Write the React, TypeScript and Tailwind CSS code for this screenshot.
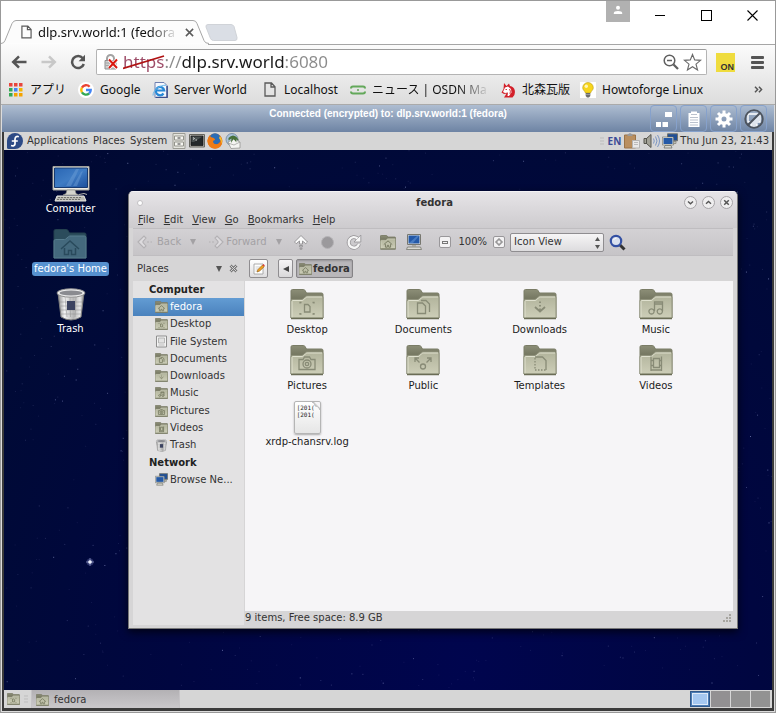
import React from "react";

type Emblem = "home" | "desktop" | "documents" | "downloads" | "music" | "pictures" | "public" | "templates" | "videos";

function EmblemShape({ kind }: { kind: Emblem }) {
  switch (kind) {
    case "home":
      return <path d="M8 20l9-8 9 8M11.500 19v6.500h4v-4h3v4h4V19" />;
    case "desktop":
      return <path d="M14.500 15.500h3.500l2 2V23h-5.500zM10 14.500v-1h1.500M24 14.500v-1h-1.500M10 24v1h1.500M24 24v1h-1.500" />;
    case "documents":
      return <path d="M11.500 14h5l3 3v7.500h-8zM15 11.500h5l3.500 3.500v8" />;
    case "downloads":
      return (
        <>
          <path d="M12 18l5 4.500 5-4.500" strokeWidth="1.800" />
          <path d="M17 12.500v1.500M17 16v1.500M17 19.500v2" strokeWidth="1.800" />
        </>
      );
    case "music":
      return <path d="M15.500 22v-9h8v9M15.500 15h8M12.500 19.800a2.600 2.600 0 1 0 .01 0M20.800 19.800a2.600 2.600 0 1 0 .01 0" />;
    case "pictures":
      return (
        <>
          <path d="M9 14.500h4l1.500-2.500h5l1.500 2.500h4v10H9z" />
          <circle cx="17" cy="19" r="4" />
          <circle cx="17" cy="19" r="1.700" />
        </>
      );
    case "public":
      return (
        <>
          <circle cx="17" cy="21.500" r="2.500" />
          <path d="M13.500 17.500l-4-4M9 17v-4h4M20.500 17.500l4-4M21 13h4v4" />
        </>
      );
    case "templates":
      return (
        <>
          <path d="M12 12h7.500l3.500 3.500V25" />
          <path d="M12 13v12h11" strokeDasharray="1.500 1.500" />
        </>
      );
    case "videos":
      return <path d="M12 11.500V26M22.500 11.500V26M14.500 13.500h6v9h-6zM12 15.500h2M12 20.500h2M20.500 15.500h2M20.500 20.500h2M12 25h10.500" />;
  }
}

function Folder({ kind, className, small = false }: { kind: Emblem; className: string; small?: boolean }) {
  return (
    <svg viewBox="0 0 34 31" className={className} aria-hidden="true">
      <defs>
        <linearGradient id="folderFront" x1="0" y1="0" x2="0" y2="1">
          <stop offset="0" stopColor="#b1b39b" />
          <stop offset="1" stopColor="#cdceb8" />
        </linearGradient>
        <linearGradient id="folderBack" x1="0" y1="0" x2="0" y2="1">
          <stop offset="0" stopColor="#8c8e77" />
          <stop offset=".3" stopColor="#777963" />
        </linearGradient>
      </defs>
      <path d="M1 29V2q0-1.500 1.500-1.500h11q1 0 1.500 1l1.500 2.500h15q1.500 0 1.500 1.500V29z" fill="url(#folderBack)" stroke="#7a7c66" strokeWidth={small ? 2 : 1} />
      <path d="M1 29V12q0-1.500 1.500-1.500h9q1 0 1.500-.7L15.500 7.700q.7-.7 1.500-.7h14.500Q33 7 33 8.500V29z" fill="url(#folderFront)" stroke="#90927c" strokeWidth={small ? 2 : 1} />
      <path d="M2 28.500V12.500q0-1 1-1h9q1 0 1.700-.8l2-2q.7-.7 1.500-.7H32" fill="none" stroke="#dfe0ce" strokeWidth="1" />
      <path d="M1 29.500h32" stroke="#6a6c55" strokeWidth="1.500" />
      <g fill="none" stroke={small ? "#74775f" : "#888b76"} strokeWidth={small ? 2 : 1.3}>
        <EmblemShape kind={kind} />
      </g>
    </svg>
  );
}

function Monitor({ className }: { className: string }) {
  return (
    <svg viewBox="0 0 38 36" className={className} aria-hidden="true">
      <defs>
        <linearGradient id="screenBlue" x1="0" y1="0" x2="1" y2="1">
          <stop offset="0" stopColor="#2a66b4" />
          <stop offset=".5" stopColor="#3f7cc4" />
          <stop offset="1" stopColor="#1c4f9c" />
        </linearGradient>
      </defs>
      <path d="M1 .5h36v23.500H1z" fill="#eceae4" stroke="#a3a39b" />
      <path d="M2.500 2h33v19.500h-33z" fill="url(#screenBlue)" stroke="#173a70" />
      <path d="M14 20L24 3h3L19 20zM21 20L29 6l2-1-6 15z" fill="#6fa0d8" opacity=".45" />
      <path d="M15 24h8l1 3.500 3 1.500H11l3-1.500z" fill="#d4d4ce" stroke="#8b8b84" strokeWidth=".6" />
      <path d="M27 28.500q6-2 8 0" stroke="#b5b5b0" fill="none" />
      <path d="M5 30h27l2 5H3z" fill="#b9b9b3" stroke="#e8e8e2" />
      <path d="M6 31.500h24M5 33.500h24" stroke="#74746f" strokeDasharray="2 1" />
    </svg>
  );
}

function SmallMonitor({ className }: { className: string }) {
  return (
    <svg viewBox="0 0 16 16" className={className} aria-hidden="true">
      <path d="M1.500.5h13v10h-13z" fill="#e6e6df" stroke="#77776f" />
      <path d="M2.500 1.500h11v8h-11z" fill="#2459a8" />
      <path d="M3 9L11 2h2L7 9z" fill="#5f93d3" opacity=".6" />
      <path d="M6 11h4v1.500H6z" fill="#a9a9a2" />
      <path d="M1.500 13h13l1 2.500H.5z" fill="#d9d9d2" stroke="#77776f" strokeWidth=".8" />
    </svg>
  );
}

function TrashCan({ className }: { className: string }) {
  return (
    <svg viewBox="0 0 30 33" className={className} aria-hidden="true">
      <defs>
        <linearGradient id="steel" x1="0" y1="0" x2="1" y2="0">
          <stop offset="0" stopColor="#8c8c8c" />
          <stop offset=".25" stopColor="#f2f2f2" />
          <stop offset=".6" stopColor="#b5b5b5" />
          <stop offset=".85" stopColor="#e8e8e8" />
          <stop offset="1" stopColor="#858585" />
        </linearGradient>
      </defs>
      <path d="M2 5l3 24q10 6 20 0l3-24z" fill="url(#steel)" stroke="#7c7c7c" />
      <path d="M4 14h22M4.500 18h21M5 22h20M5 26h20M9 9l2 20M14 9l.5 20M20 9l-1 20" stroke="#8b8b8b" strokeWidth=".7" opacity=".7" />
      <path d="M11 13h8v9h-8z" fill="#3c4360" />
      <ellipse cx="15" cy="5" rx="14" ry="4.200" fill="#ececec" stroke="#909090" />
      <ellipse cx="15" cy="5" rx="11.500" ry="2.600" fill="#8a8b90" />
    </svg>
  );
}

function Network({ className }: { className: string }) {
  return (
    <svg viewBox="0 0 16 16" className={className} aria-hidden="true">
      <path d="M5.500.8h10v7h-10z" fill="#1f4f97" stroke="#74746b" />
      <path d="M10 8.500h4v2h-4z" fill="#c5c5bb" stroke="#74746b" strokeWidth=".6" />
      <path d="M1 4.500h10v7H1z" fill="#2459a6" stroke="#e5e5dc" />
      <path d="M.4 4h11.200v8H.4z" fill="none" stroke="#66665d" strokeWidth=".6" />
      <path d="M3 12.500h6l1 2.500H2z" fill="#d8d8cf" stroke="#66665d" strokeWidth=".7" />
    </svg>
  );
}

function PageIcon({ className }: { className: string }) {
  return (
    <svg viewBox="0 0 12 15" className={className} aria-hidden="true" fill="none" stroke="#5a5a5a" strokeWidth="1.300">
      <path d="M1 1h6.500L11 4.700V14H1zM7 1v4h4" />
    </svg>
  );
}

const bookmarks: { label: string; icon: React.ReactNode; fade?: boolean; box: string }[] = [
  {
    label: "アプリ",
    box: "w-[70px]",
    icon: (
      <svg viewBox="0 0 16 16" className="size-4">
        {["#e8453c", "#e8453c", "#e8453c", "#34a853", "#4285f4", "#f4b400", "#34a853", "#f4a300", "#f4a300"].map((c, i) => (
          <rect key={i} x={1 + (i % 3) * 5} y={1 + Math.floor(i / 3) * 5} width="3.500" height="3.500" fill={c} />
        ))}
      </svg>
    ),
  },
  {
    label: "Google",
    box: "w-[74px]",
    icon: (
      <svg viewBox="0 0 16 16" className="size-4">
        <circle cx="8" cy="8" r="8" fill="#fff" />
        <g fill="none" strokeWidth="2.400">
          <path d="M11.600 4.700A4.800 4.800 0 0 0 3.900 5.600" stroke="#ea4335" />
          <path d="M3.900 5.600a4.900 4.900 0 0 0 0 4.800" stroke="#fbbc05" />
          <path d="M3.900 10.400a4.800 4.800 0 0 0 7.200 1.100" stroke="#34a853" />
          <path d="M11.100 11.500A4.600 4.600 0 0 0 12.700 8H8" stroke="#4285f4" />
        </g>
      </svg>
    ),
  },
  {
    label: "Server World",
    box: "w-[110px]",
    icon: (
      <svg viewBox="0 0 16 16" className="size-4">
        <path d="M3 .5h9l3.500 3.500v11.500H3z" fill="#f4f7fd" stroke="#6f80b0" />
        <path d="M15 4v11.500H4" stroke="#3d4f8c" fill="none" strokeWidth="1.500" />
        <path d="M11.500 11.500a4.200 4.200 0 1 1 .7-3H5" fill="none" stroke="#2789d6" strokeWidth="2.200" />
        <path d="M1 13.500C1 8 8 3 14 3.200" fill="none" stroke="#67b7ea" />
      </svg>
    ),
  },
  { label: "Localhost", box: "w-[88px]", icon: <PageIcon className="h-[15px] w-4" /> },
  {
    label: "ニュース | OSDN Ma",
    box: "w-[150px]",
    fade: true,
    icon: (
      <svg viewBox="0 0 16 16" className="size-4">
        <path d="M1 6.500q0-2 2-2h10q2 0 2 2M15 9.500q0 2-2 2H3q-2 0-2-2" fill="none" stroke="#63a85a" strokeWidth="2" />
        <circle cx="8" cy="8" r="1" fill="#63a85a" />
      </svg>
    ),
  },
  {
    label: "北森瓦版",
    box: "w-[80px]",
    icon: (
      <svg viewBox="0 0 16 16" className="size-4">
        <path d="M4 1l2.500 3L9 1.500 10 4q4 .5 4.800 4.500.7 5-2.300 7H4l2.500-4L4 12l-2.500-1.500L3.500 7z" fill="#d3202a" />
        <path d="M5 5.500l3-1 3 2.500.5 3.500L9 14H7.500L8 10.500 5 11l-2-1z" fill="#fff" />
        <path d="M5.500 7.500h1.500M10.500 5q2.500 2 2.500 5M9.500 7q1.500 2 .5 5" stroke="#d3202a" fill="none" strokeWidth=".9" />
      </svg>
    ),
  },
  {
    label: "Howtoforge Linux",
    box: "w-[130px]",
    icon: (
      <svg viewBox="0 0 16 16" className="size-4 bg-white">
        <path d="M8 .5a5.300 5.300 0 0 0-5.300 5.300c0 2.200 2 3 2.800 5.200h5c.8-2.200 2.800-3 2.800-5.200A5.300 5.300 0 0 0 8 .5z" fill="#f7d51d" stroke="#b99a12" strokeWidth=".6" />
        <circle cx="6.300" cy="4.300" r="1.700" fill="#fff6b5" />
        <path d="M5.700 11h4.600v3l-1.300 1.500H7L5.700 14z" fill="#6d6d6d" />
        <path d="M5.700 12.500h4.600" stroke="#bbb" strokeWidth=".6" />
      </svg>
    ),
  },
];

function BrowserChrome() {
  return (
    <header className="font-['Noto_Sans','Noto_Sans_CJK_JP',sans-serif] text-[#111]">
      <div className="flex h-[43px] items-start justify-between">
        <div className="flex items-start pt-[19px]">
          <div className="relative h-6 w-[208px]">
            <svg viewBox="0 0 208 24" className="absolute inset-0 h-6 w-[208px]" aria-hidden="true">
              <path d="M0 23.500q3 0 4-3L11 3.500Q12.500.5 15 .5h177q3 0 4 3l7 17q1 3 5 3" fill="#fcfcfc" stroke="#a6a6a6" />
            </svg>
            <div className="relative flex h-6 items-center pl-5">
              <PageIcon className="h-[14px] w-[11px]" />
              <span className="ml-[6px] w-[139px] text-[13px] leading-5 whitespace-nowrap [mask-image:linear-gradient(to_right,black_112px,transparent_140px)]">
                dlp.srv.world:1 (fedora
              </span>
              <button aria-label="Close tab" className="ml-1 flex size-4 items-center justify-center">
                <svg viewBox="0 0 10 10" className="size-[9px]" stroke="#5a5a5a" strokeWidth="1.700">
                  <path d="M1 1l8 8M9 1l-8 8" />
                </svg>
              </button>
            </div>
          </div>
          <button aria-label="New tab" className="mt-1 -ml-1 h-[18px] w-[33px]">
            <svg viewBox="0 0 33 18" className="h-[18px] w-[33px]">
              <path d="M3 .5h23q2 0 3 2l3 11q.5 3-2 3H8.500q-2 0-3-2L1 3Q.5.500 3 .5z" fill="#dadee5" stroke="#d0d3d8" />
            </svg>
          </button>
        </div>
        <div className="flex items-start pr-[17px]">
          <button aria-label="Profile" className="flex h-[21px] w-6 justify-center bg-[#b1b1b1] pt-1">
            <svg viewBox="0 0 10 10" className="size-[10px]" fill="#fff">
              <circle cx="5" cy="2.800" r="2" />
              <path d="M.8 9V8q0-2 4.200-2t4.200 2v1z" />
            </svg>
          </button>
          <div className="ml-[25px] flex h-7 items-center gap-[35px]">
            <button aria-label="Minimize" className="flex h-3 w-[11px] items-center">
              <span className="h-px w-[10px] bg-black" />
            </button>
            <button aria-label="Maximize" className="size-[11px] border border-black" />
            <button aria-label="Close">
              <svg viewBox="0 0 11 11" className="size-[11px]" stroke="#000" strokeWidth="1.100">
                <path d="M.5.5l10 10M10.500.5l-10 10" />
              </svg>
            </button>
          </div>
        </div>
      </div>

      <div className="bg-gradient-to-b from-[#fcfcfc] to-[#dcdcdc]">
        <div className="ml-[207px] h-px bg-[#a6a6a6]" />
        <div className="flex h-[34px] items-center pr-[11px] pl-[10px]">
          <button aria-label="Back">
            <svg viewBox="0 0 16 14" className="h-[14px] w-4" fill="none" stroke="#555" strokeWidth="2.500">
              <path d="M15.500 7H3M8 1.300L2.200 7 8 12.700" />
            </svg>
          </button>
          <button aria-label="Forward" className="ml-[14px]">
            <svg viewBox="0 0 16 14" className="h-[14px] w-4" fill="none" stroke="#c8c8c8" strokeWidth="2.500">
              <path d="M.5 7H13M8 1.300L13.800 7 8 12.700" />
            </svg>
          </button>
          <button aria-label="Reload" className="ml-[13px]">
            <svg viewBox="0 0 16 16" className="size-4" fill="none" stroke="#555" strokeWidth="2.500">
              <path d="M12.800 4.300A6 6 0 1 0 13.800 10" />
              <path d="M15 .8v6.400H8.600z" fill="#555" stroke="none" />
            </svg>
          </button>
          <div className="ml-[10px] flex h-[26px] flex-1 items-center rounded-[2px] border border-[#b4b4b4] border-t-[#9c9c9c] bg-white pr-1 pl-[6px]">
            <svg viewBox="0 0 16 16" className="size-4 shrink-0" aria-hidden="true">
              <path d="M4 7V4.500a3.500 3.500 0 0 1 7 0V7" fill="none" stroke="#a3a3a3" strokeWidth="2" />
              <path d="M2 6.500h11V15H2z" fill="#cfcfcf" stroke="#8f8f8f" />
              <path d="M2.500 9h10M2.500 11.500h10" stroke="#a5a5a5" />
              <path d="M6 5.500l8 8.500M14 5.500L6 14" stroke="#fff" strokeWidth="3.500" />
              <path d="M6 5.500l8 8.500M14 5.500L6 14" stroke="#d8180f" strokeWidth="2" />
            </svg>
            <div className="relative ml-1 flex-1">
              <input
                aria-label="Address"
                defaultValue="https://dlp.srv.world:6080"
                className="block h-6 w-full bg-[linear-gradient(to_right,#9c4a66_42px,#8a8a8a_42px,#8a8a8a_59px,#1a1a1a_59px,#1a1a1a_162px,#8a8a8a_162px)] bg-clip-text text-[17px] leading-6 text-transparent outline-none"
              />
              <svg viewBox="0 0 42 16" className="pointer-events-none absolute top-1 left-0 h-4 w-[42px]" aria-hidden="true">
                <path d="M0 14.500L41 2" stroke="#b01212" strokeWidth="1.800" />
              </svg>
            </div>
            <button aria-label="Zoom">
              <svg viewBox="0 0 16 16" className="size-4" fill="none" stroke="#606060">
                <circle cx="6.500" cy="6.500" r="5.300" strokeWidth="1.500" />
                <path d="M4 6.500h5" strokeWidth="1.500" />
                <path d="M10.500 10.500l4.500 4.500" strokeWidth="2.300" />
              </svg>
            </button>
            <button aria-label="Bookmark" className="ml-1">
              <svg viewBox="0 0 20 20" className="size-[19px]" fill="none" stroke="#6b6b6b" strokeWidth="1.200">
                <path d="M10 1.500l2.300 5.800 6.200.4-4.800 4 1.600 6.100L10 14.400l-5.300 3.400 1.600-6.100-4.800-4 6.200-.4z" />
              </svg>
            </button>
          </div>
          <button aria-label="Extension" className="ml-[9px] flex h-[19px] w-[19px] items-end justify-end bg-[#efdc3e] pr-px font-['Liberation_Sans',Arial,sans-serif] text-[9px] leading-[10px] font-bold text-[#333]">
            ON
          </button>
          <button aria-label="Menu" className="ml-4 flex w-[13px] flex-col gap-[2px]">
            <span className="h-[3px] w-full rounded-[1px] bg-[#555]" />
            <span className="h-[3px] w-full rounded-[1px] bg-[#555]" />
            <span className="h-[3px] w-full rounded-[1px] bg-[#555]" />
          </button>
        </div>
        <nav aria-label="Bookmarks" className="flex h-[26px] items-center justify-between border-b border-[#aaa] pr-3 pb-1 pl-[7px]">
          <div className="flex">
            {bookmarks.map((b) => (
              <a key={b.label} href="#" className={`flex shrink-0 items-center gap-[6px] text-xs leading-5 whitespace-nowrap ${b.box}`}>
                <span className="shrink-0" aria-hidden="true">{b.icon}</span>
                {b.fade ? (
                  <span className="[mask-image:linear-gradient(to_right,black_86px,transparent_118px)]">{b.label}</span>
                ) : (
                  <span>{b.label}</span>
                )}
              </a>
            ))}
          </div>
          <button aria-label="More bookmarks">
            <svg viewBox="0 0 10 8" className="h-[7px] w-[9px]" fill="none" stroke="#555" strokeWidth="1.700">
              <path d="M1 .8L4 4 1 7.200M5.500.8L8.500 4l-3 3.200" />
            </svg>
          </button>
        </nav>
      </div>
    </header>
  );
}

function ControlBar() {
  const btn = "flex h-[27px] w-[27px] items-center justify-center rounded-[4px] border border-[#86a1cb]";
  return (
    <div className="grid h-[27px] grid-cols-[1fr_auto_1fr] bg-gradient-to-b from-[#aebdd1] to-[#6e84a4] px-[7px]">
      <span />
      <p className="font-['Liberation_Sans',Arial,sans-serif] text-[10px] leading-[18px] font-bold whitespace-nowrap text-white">
        Connected (encrypted) to: dlp.srv.world:1 (fedora)
      </p>
      <div className="flex justify-end gap-[3px]">
        <button aria-label="Keys" className={btn}>
          <svg viewBox="0 0 18 18" className="size-[18px]" fill="#fff">
            <path d="M10 2h7v5h-7zM1 12h5v5H1zM7.500 12h5.500v5H7.500z" />
          </svg>
        </button>
        <button aria-label="Clipboard" className={btn}>
          <svg viewBox="0 0 14 18" className="h-[18px] w-[14px]">
            <path d="M1.500 3H4V1.500h6V3h2.500v14h-11z" fill="#fff" />
            <path d="M4 4.500h6M3 7.500h8M3 10h8M3 12.500h8M3 15h8" stroke="#a9b3c2" strokeWidth=".8" />
          </svg>
        </button>
        <button aria-label="Settings" className={btn}>
          <svg viewBox="0 0 18 18" className="size-[18px]">
            <circle cx="9" cy="9" r="4.300" fill="none" stroke="#fff" strokeWidth="3.600" />
            <path d="M9 .5v4M9 13.500v4M.5 9h4M13.500 9h4M3 3l2.800 2.800M12.200 12.200L15 15M15 3l-2.800 2.800M5.800 12.200L3 15" stroke="#fff" strokeWidth="3" />
          </svg>
        </button>
        <button aria-label="Disconnect" className={btn}>
          <svg viewBox="0 0 20 20" className="size-[20px]">
            <path d="M4 5h12v8H4zM7 15h6v2H7z" fill="none" stroke="#fff" strokeWidth="1.400" />
            <path d="M15 6v8H7z" fill="#dfe5ee" />
            <circle cx="10" cy="10" r="8.800" fill="none" stroke="#4d545e" strokeWidth="1.800" />
            <path d="M16 4L4 16" stroke="#4d545e" strokeWidth="2" />
          </svg>
        </button>
      </div>
    </div>
  );
}

function TopPanel() {
  return (
    <div className="flex h-[18px] items-center justify-between bg-[#d6d6d6] pr-[3px] pl-[3px]">
      <div className="flex items-center">
        <svg viewBox="0 0 16 16" className="size-4" aria-hidden="true">
          <path d="M8 0a8 8 0 1 1 0 16H1.500Q0 16 0 14.500V8a8 8 0 0 1 8-8z" fill="#2c4a86" />
          <path d="M11.800 3.800Q8.500 2.500 8 6v5Q7.500 13.500 4 12.500M4.800 8h6" fill="none" stroke="#fff" strokeWidth="1.700" />
        </svg>
        <button className="ml-1">Applications</button>
        <button className="ml-[5px]">Places</button>
        <button className="ml-[5px]">System</button>
        <div className="ml-1 flex items-center gap-[2px]">
          <svg viewBox="0 0 16 16" className="h-4 w-4" aria-hidden="true">
            <path d="M2 .5h12v15H2z" fill="#e4e4de" stroke="#9c9c94" />
            <path d="M3.500 3h9v4h-9zM3.500 9h9v4h-9z" fill="#f6f6f1" stroke="#94948c" />
            <path d="M6.500 5h3M6.500 11h3" stroke="#777" strokeWidth="1.500" />
          </svg>
          <svg viewBox="0 0 16 16" className="h-4 w-4" aria-hidden="true">
            <path d="M.5 1.500h15v12.500H.5z" fill="#b8b8b4" stroke="#66665f" />
            <path d="M2 3h12v9.500H2z" fill="#23282a" stroke="#111" strokeWidth=".7" />
            <path d="M2.500 3.500h11L5 9H2.500z" fill="#59605f" opacity=".7" />
            <path d="M4 4.500l1.500 1L4 6.500M6.500 7H8" stroke="#eee" fill="none" strokeWidth=".8" />
          </svg>
          <svg viewBox="0 0 16 16" className="h-4 w-4" aria-hidden="true">
            <circle cx="8" cy="8" r="7.500" fill="#e66a12" />
            <circle cx="8" cy="6" r="5.800" fill="#2b6cb5" />
            <path d="M.5 7Q1 4 3 2q0 2 2 2.500Q8 5 8 7q-2 0-2 2 1 3 5 2 3-1 3-5 2 5-1 8-5 3.500-10 0Q0 11 .5 7z" fill="#ee7b15" />
            <path d="M13 3q3 4 1.500 8Q14 7 12 5z" fill="#f8c22c" />
          </svg>
          <svg viewBox="0 0 16 16" className="h-4 w-4" aria-hidden="true">
            <circle cx="7" cy="6.500" r="6" fill="#a9c3dc" stroke="#8093a6" />
            <path d="M3 9l6-3 6 3v6l-9 .5z" fill="#f4f4f2" stroke="#8b8b88" strokeWidth=".7" />
            <path d="M3 10l6 2 6-3" fill="none" stroke="#9a9a96" strokeWidth=".7" />
            <path d="M3.500 5q4-4.500 8-1l2.500 3.500-3-1 .5 3-3-3.500-2.500 4 .5-4.500-3 2z" fill="#47703a" />
          </svg>
        </div>
      </div>
      <div className="flex items-center">
        <svg viewBox="0 0 4 8" className="h-2 w-1" stroke="#bdbdbd" aria-hidden="true">
          <path d="M0 1h4M0 4h4M0 7h4" />
        </svg>
        <span className="ml-1 font-['Noto_Sans',sans-serif] font-bold text-[#3c4c96]">EN</span>
        <svg viewBox="0 0 17 16" className="ml-[3px] h-4 w-[17px]" aria-hidden="true">
          <path d="M.5 2h11v13H.5z" fill="#b98f5f" stroke="#9a7346" />
          <path d="M3.500 3V1.500L6 0l2.500 1.500V3z" fill="#999" />
          <path d="M8.500 7.500h7V15h-7z" fill="#e9e9e9" stroke="#b5b5b5" />
          <path d="M10 9.500h4M10 11.500h4" stroke="#bbb" />
        </svg>
        <svg viewBox="0 0 17 16" className="ml-[2px] h-4 w-[17px]" aria-hidden="true">
          <path d="M1 5.500h2.500L8 1.500v13l-4.500-4H1z" fill="#a3a398" stroke="#55554e" />
          <path d="M3.500 5v6" stroke="#55554e" />
          <path d="M10.500 5.500q1.500 2.500 0 5M12.500 3.500q3 4.500 0 9M14.500 2q4 6 0 12" fill="none" stroke="#7b96c4" />
        </svg>
        <Network className="ml-[2px] size-4" />
        <time className="ml-[2px]">Thu Jun 23, 21:43</time>
      </div>
    </div>
  );
}

// Small linear congruential generator, so the sky is the same on each load.
function makeStars(count: number) {
  let seed = 77;
  const next = () => {
    seed = (seed * 16807) % 2147483647;
    return seed / 2147483647;
  };
  return Array.from({ length: count }, () => ({ x: next() * 100, y: next() * 100, o: 0.1 + next() ** 4 * 0.45 }));
}
const stars = makeStars(900);

function Sky() {
  return (
    <svg className="absolute inset-0 size-full" aria-hidden="true">
      {stars.map((s, i) => (
        <rect key={i} x={`${s.x}%`} y={`${s.y}%`} width="1" height="1" fill="#a8b4e8" opacity={s.o} />
      ))}
      <g transform="translate(86 412)" stroke="#cdd4ff">
        <circle r="3.500" fill="#8e98d8" opacity=".3" stroke="none" />
        <circle r="1.800" fill="#fff" stroke="none" />
        <path d="M-4 0h8M0-4v8" strokeWidth=".8" opacity=".6" />
      </g>
    </svg>
  );
}

function DesktopIcons() {
  return (
    <div className="relative flex w-[133px] flex-col items-center gap-[10px] pt-4 text-white">
      <button className="flex flex-col items-center">
        <Monitor className="h-9 w-[38px]" />
        <span className="h-[14px] leading-[14px]">Computer</span>
      </button>
      <button className="flex flex-col items-center">
        <span className="flex h-9 items-center">
          <svg viewBox="0 0 34 31" className="h-[31px] w-[34px]" aria-hidden="true">
            <path d="M1 29V2q0-1.500 1.500-1.500h11q1 0 1.500 1l1.500 2.500h15q1.500 0 1.500 1.500V29z" fill="#2b4c5c" stroke="#24414f" />
            <path d="M1 29V12q0-1.500 1.500-1.500h9q1 0 1.500-.7L15.500 7.700q.7-.7 1.500-.7h14.500Q33 7 33 8.500V29z" fill="#44697d" stroke="#567c8d" />
            <path d="M8 20l9-8 9 8M11.500 19v6.500h4v-4h3v4h4V19" fill="none" stroke="#294a5c" strokeWidth="1.500" />
          </svg>
        </span>
        <span className="h-[14px] rounded-[3px] bg-[#5691cf] px-[2px] leading-[14px]">fedora's Home</span>
      </button>
      <button className="flex flex-col items-center">
        <span className="flex h-9 items-center">
          <TrashCan className="h-[33px] w-[30px]" />
        </span>
        <span className="h-[14px] leading-[14px]">Trash</span>
      </button>
    </div>
  );
}

function Triangle({ className }: { className: string }) {
  return (
    <svg viewBox="0 0 6 6" className={className} fill="currentColor" aria-hidden="true">
      <path d="M0 0h6L3 6z" />
    </svg>
  );
}

const menus = ["File", "Edit", "View", "Go", "Bookmarks", "Help"];

type PlaceKind = Emblem | "disk" | "trash" | "net";

const placeGroups: { heading: string; rows: string; items: { label: string; kind: PlaceKind }[] }[] = [
  {
    heading: "Computer",
    rows: "h-[173px]",
    items: [
      { label: "fedora", kind: "home" },
      { label: "Desktop", kind: "desktop" },
      { label: "File System", kind: "disk" },
      { label: "Documents", kind: "documents" },
      { label: "Downloads", kind: "downloads" },
      { label: "Music", kind: "music" },
      { label: "Pictures", kind: "pictures" },
      { label: "Videos", kind: "videos" },
      { label: "Trash", kind: "trash" },
    ],
  },
  { heading: "Network", rows: "h-[34px]", items: [{ label: "Browse Ne...", kind: "net" }] },
];

const folders: { label: string; kind: Emblem }[] = [
  { label: "Desktop", kind: "desktop" },
  { label: "Documents", kind: "documents" },
  { label: "Downloads", kind: "downloads" },
  { label: "Music", kind: "music" },
  { label: "Pictures", kind: "pictures" },
  { label: "Public", kind: "public" },
  { label: "Templates", kind: "templates" },
  { label: "Videos", kind: "videos" },
];

function PlaceIcon({ kind }: { kind: PlaceKind }) {
  if (kind === "disk")
    return (
      <svg viewBox="0 0 13 13" className="size-[13px]" aria-hidden="true">
        <path d="M1.500 1h10v11h-10z" fill="#f4f4f4" stroke="#8e8e8e" />
        <path d="M3.500 3h6v5h-6zM3.500 10h6" fill="#e2e2e2" stroke="#aaa" strokeWidth=".8" />
      </svg>
    );
  if (kind === "trash") return <TrashCan className="h-[13px] w-[13px]" />;
  if (kind === "net") return <Network className="size-[13px]" />;
  return <Folder small kind={kind} className="h-3 w-[13px]" />;
}

function FileManager() {
  const round = "flex size-[13px] items-center justify-center rounded-full border border-[#a5a3a6] bg-[#efeeef]";
  return (
    <section
      aria-label="fedora"
      className="absolute top-[41px] right-[34px] bottom-[61px] left-[124px] flex flex-col rounded-t-[5px] border border-[#777] border-t-[#f3f2f4] bg-[#d6d5d6] px-1 text-[#333] shadow-[0_3px_8px_rgba(0,0,0,0.7)]"
    >
      <div className="-mx-1 rounded-t-[4px] bg-gradient-to-b from-[#e6e4e7] to-[#cdcbce] px-1">
        <div className="flex h-[19px] items-center justify-between pt-[2px] pl-1">
          <span className="size-[6px] rounded-full border border-[#c2c0c3] bg-white" />
          <h1 className="pl-[42px] text-[10px] font-bold">fedora</h1>
          <div className="flex gap-[5px]">
            <button aria-label="Minimize window" className={round}>
              <svg viewBox="0 0 7 7" className="size-[7px]" fill="none" stroke="#555" strokeWidth="1.400"><path d="M1 2.500l2.500 2.200L6 2.500" /></svg>
            </button>
            <button aria-label="Maximize window" className={round}>
              <svg viewBox="0 0 7 7" className="size-[7px]" fill="none" stroke="#555" strokeWidth="1.400"><path d="M1 4.700l2.500-2.200L6 4.700" /></svg>
            </button>
            <button aria-label="Close window" className={round}>
              <svg viewBox="0 0 7 7" className="size-[7px]" fill="none" stroke="#555" strokeWidth="1.500"><path d="M1.200 1.200l4.600 4.600M5.800 1.200L1.200 5.800" /></svg>
            </button>
          </div>
        </div>
        <nav className="flex h-[17px] items-center gap-[9px] pl-[5px]">
          {menus.map((m) => (
            <button key={m}>
              <span className="underline underline-offset-1">{m[0]}</span>
              {m.slice(1)}
            </button>
          ))}
        </nav>
      </div>

      <div className="flex h-7 items-center border-t border-b border-[#bfbdc0] bg-gradient-to-b from-[#d3d1d4] to-[#c6c4c7] pl-1 text-[#a3a1a4]">
        <button className="flex items-center gap-1">
          <svg viewBox="0 0 16 14" className="h-[14px] w-4" fill="none" stroke="#b3b1b4" strokeWidth="1.100" aria-hidden="true">
            <path d="M1 7l6-6 2 2-3 3.500v1L9 11l-2 2zM10 7h2M13.500 7H15" fill="#dddbde" />
          </svg>
          Back
        </button>
        <button aria-label="Back history" className="ml-[9px]"><Triangle className="size-[6px]" /></button>
        <button className="ml-3 flex items-center gap-[2px]">
          <svg viewBox="0 0 16 14" className="h-[14px] w-4" fill="none" stroke="#b3b1b4" strokeWidth="1.100" aria-hidden="true">
            <path d="M15 7L9 1 7 3l3 3.500v1L7 11l2 2zM6 7H4M2.500 7H1" fill="#dddbde" />
          </svg>
          Forward
        </button>
        <button aria-label="Forward history" className="ml-[9px]"><Triangle className="size-[6px]" /></button>
        <button aria-label="Up" className="ml-[11px]">
          <svg viewBox="0 0 16 16" className="size-4" fill="#fafafa" stroke="#8f8d90" strokeWidth=".9">
            <path d="M8 1.500l6.500 6.500-1.700 1.700L9.500 7v3h-3V7L3.200 9.700 1.500 8zM6.500 11.500h3v1.300h-3zM7 14.200h2v1H7z" />
          </svg>
        </button>
        <button aria-label="Stop" className="ml-3 size-[13px] rounded-full border border-[#b5b3b6] bg-[#9b999c]" />
        <button aria-label="Reload folder" className="ml-3">
          <svg viewBox="0 0 16 16" className="size-4" fill="none">
            <path d="M11.500 4.500A5.300 5.300 0 1 0 13 10" stroke="#929093" strokeWidth="3.800" />
            <path d="M14.800 1v7H8z" fill="#f6f6f6" stroke="#929093" strokeWidth=".8" />
            <path d="M11.500 4.500A5.300 5.300 0 1 0 13 10" stroke="#f6f6f6" strokeWidth="2.400" />
          </svg>
        </button>
        <button aria-label="Home" className="ml-[18px]"><Folder small kind="home" className="h-[15px] w-4" /></button>
        <button aria-label="Computer" className="ml-[10px]"><SmallMonitor className="size-4" /></button>
        <button aria-label="Zoom out" className="ml-[17px] flex size-3 items-center justify-center rounded-[2px] border border-[#99979a] bg-[#f3f2f3]">
          <span className="h-[3px] w-[6px] border border-[#777]" />
        </button>
        <span className="ml-2 text-[#333]">100%</span>
        <button aria-label="Zoom in" className="ml-[6px] flex size-3 items-center justify-center rounded-[2px] border border-[#99979a] bg-[#f3f2f3]">
          <svg viewBox="0 0 8 8" className="size-2" fill="none" stroke="#666" strokeWidth=".8"><path d="M3 1h2v2h2v2H5v2H3V5H1V3h2z" /></svg>
        </button>
        <div className="relative ml-[5px]">
          <select aria-label="View mode" className="block h-[19px] w-[94px] appearance-none rounded-[2px] border border-[#8f8d90] bg-gradient-to-b from-[#f6f5f6] to-[#dddcde] pl-[3px] text-[10px] text-[#333]">
            <option>Icon View</option>
            <option>List View</option>
          </select>
          <svg viewBox="0 0 5 12" className="pointer-events-none absolute top-1 right-1 h-3 w-[5px]" fill="#555" aria-hidden="true">
            <path d="M0 4h5L2.500 0zM0 8h5L2.500 12z" />
          </svg>
        </div>
        <button aria-label="Search" className="ml-[5px]">
          <svg viewBox="0 0 17 17" className="size-[17px]" fill="none">
            <path d="M11 11l4.500 4.500" stroke="#333" strokeWidth="3" />
            <circle cx="7" cy="7" r="5.200" fill="#d9e0ee" stroke="#3350a3" strokeWidth="2.200" />
            <path d="M4.500 6q1-2 3-2" stroke="#fff" />
          </svg>
        </button>
      </div>

      <div className="flex h-[25px] shrink-0 items-center">
        <div className="flex w-[111px] items-center pr-[6px] pl-1">
          <span className="flex-1">Places</span>
          <Triangle className="size-[6px] text-[#555]" />
          <button aria-label="Close side pane" className="ml-[7px]">
            <svg viewBox="0 0 9 9" className="size-[9px]"><path d="M1.500 1.500l6 6M7.500 1.500l-6 6" stroke="#777" strokeWidth="2.800" /><path d="M1.500 1.500l6 6M7.500 1.500l-6 6" stroke="#d6d5d6" strokeWidth="1" /></svg>
          </button>
        </div>
        <button aria-label="Edit location" className="ml-[5px] flex size-[19px] items-center justify-center rounded-[2px] border border-[#8f8d90] bg-gradient-to-b from-white to-[#dedddf]">
          <svg viewBox="0 0 12 12" className="size-3">
            <path d="M1 1h9v10H1z" fill="#fff" stroke="#999" strokeWidth=".8" />
            <path d="M2.500 4h5M2.500 6h4M2.500 8h3" stroke="#bbb" strokeWidth=".7" />
            <path d="M4 9l1-2.500L9.500 2l1.700 1.700L6.700 8z" fill="#f0a022" stroke="#8d5a13" strokeWidth=".6" />
            <path d="M9.500 2l1-1 1.300 1.500-.8 1z" fill="#d33" />
          </svg>
        </button>
        <button aria-label="Previous path" className="ml-[10px] flex h-[19px] w-[15px] items-center justify-center rounded-[2px] border border-[#8f8d90] bg-gradient-to-b from-[#f5f4f5] to-[#d9d8da]">
          <svg viewBox="0 0 6 6" className="size-[6px]" fill="#444"><path d="M6 0v6L0 3z" /></svg>
        </button>
        <button className="ml-[3px] flex h-[19px] items-center gap-px rounded-[2px] border border-[#858386] bg-[#b9b7ba] px-[2px] font-bold shadow-[inset_0_1px_2px_rgba(0,0,0,0.2)]">
          <Folder small kind="home" className="h-3 w-[13px]" />
          fedora
        </button>
      </div>

      <div className="flex min-h-0 flex-1 pb-[3px]">
        <aside className="w-[111px] shrink-0 bg-[#e3e2e3]">
          {placeGroups.map((g) => (
            <div key={g.heading} className={`flex flex-col ${g.rows}`}>
              <h2 className="flex flex-1 items-center pl-4 text-[10px] font-bold text-[#222]">{g.heading}</h2>
              {g.items.map((p) => (
                <a
                  key={p.label}
                  href="#"
                  className={`flex flex-1 items-center gap-[2px] pl-[22px] ${p.label === "fedora" ? "bg-gradient-to-b from-[#639cd3] to-[#4a82bd] text-white" : ""}`}
                >
                  <PlaceIcon kind={p.kind} />
                  {p.label}
                </a>
              ))}
            </div>
          ))}
        </aside>
        <div className="ml-px flex min-w-0 flex-1 flex-col">
          <div className="flex-1 bg-[#f6f5f7] pt-2 pr-[19px] pl-1 text-[#1c1c1c]">
            <div className="grid grid-cols-4">
              {folders.map((f) => (
                <button key={f.label} className="flex h-14 flex-col items-center">
                  <Folder kind={f.kind} className="h-[31px] w-[34px]" />
                  <span className="mt-[3px] leading-[14px]">{f.label}</span>
                </button>
              ))}
              <button className="flex h-14 flex-col items-center">
                <span className="relative flex h-[33px] w-[27px] overflow-hidden rounded-[2px] border border-[#b5b5b5] bg-gradient-to-b from-white to-[#e6e6e6] pt-[2px] pl-[2px] shadow-[0_1px_2px_rgba(0,0,0,0.3)]">
                  <span className="text-left font-['DejaVu_Sans_Mono',monospace] text-[6px] leading-[7px] whitespace-nowrap">
                    [201(
                    <br />
                    [201(
                  </span>
                  <svg viewBox="0 0 8 8" className="absolute top-0 right-0 size-2" aria-hidden="true">
                    <path d="M0 0h8v8Q7 4 3 4 3 1 0 0z" fill="#ccc" stroke="#aaa" strokeWidth=".6" />
                    <path d="M2 0h6v6z" fill="#f6f5f7" />
                  </svg>
                </span>
                <span className="mt-px leading-[14px] whitespace-nowrap">xrdp-chansrv.log</span>
              </button>
            </div>
          </div>
          <footer className="flex h-[14px] items-center justify-between pr-[2px]">
            <span>9 items, Free space: 8.9 GB</span>
            <svg viewBox="0 0 8 8" className="size-2" fill="#a7a5a0" aria-hidden="true">
              <path d="M6 0h2v2H6zM3 3h2v2H3zM6 3h2v2H6zM0 6h2v2H0zM3 6h2v2H3zM6 6h2v2H6z" />
            </svg>
          </footer>
        </div>
      </div>
    </section>
  );
}

function BottomPanel() {
  return (
    <div className="flex h-[18px] items-center justify-between bg-[#d6d6d6] pr-[2px] pl-[3px]">
      <div className="flex h-full items-center">
        <button aria-label="Show desktop"><Folder small kind="desktop" className="h-3 w-[13px]" /></button>
        <svg viewBox="0 0 4 8" className="ml-1 h-2 w-1" stroke="#bdbdbd" aria-hidden="true"><path d="M0 1h4M0 4h4M0 7h4" /></svg>
        <button className="ml-[3px] flex h-full w-[149px] items-center gap-[5px] border-r border-l border-[#c5c3c6] bg-gradient-to-b from-[#b3b1b4] to-[#cac8cb] pt-px pl-1">
          <Folder small kind="home" className="h-3 w-[13px]" />
          fedora
        </button>
      </div>
      <div className="flex h-4 gap-px">
        <button aria-label="Workspace 1" className="w-5 border border-[#31588a] bg-[#4c7db5] p-px">
          <span className="block size-full border border-[#dfeaf8] bg-[#a6c8f0]" />
        </button>
        <button aria-label="Workspace 2" className="w-[19px] bg-[#929092]" />
        <button aria-label="Workspace 3" className="w-[19px] bg-[#929292]" />
        <button aria-label="Workspace 4" className="w-[19px] bg-[#929292]" />
      </div>
    </div>
  );
}

export default function App() {
  return (
    <div className="flex min-h-screen flex-col border border-[#999] bg-white">
      <BrowserChrome />
      <main className="flex flex-1 flex-col border-r border-b border-l border-[#dcdcdc]">
        <ControlBar />
        <div className="flex flex-1 flex-col border-x-2 border-b-[3px] border-[#3b3b3b] font-['DejaVu_Sans',sans-serif] text-[10px] leading-[14px] text-[#333]">
          <TopPanel />
          <div className="relative min-h-[480px] flex-1 bg-[radial-gradient(ellipse_at_60%_95%,#00054e_0%,#000640_45%,#000a36_80%,#000730_100%)]">
            <Sky />
            <DesktopIcons />
            <FileManager />
          </div>
          <BottomPanel />
        </div>
      </main>
    </div>
  );
}
